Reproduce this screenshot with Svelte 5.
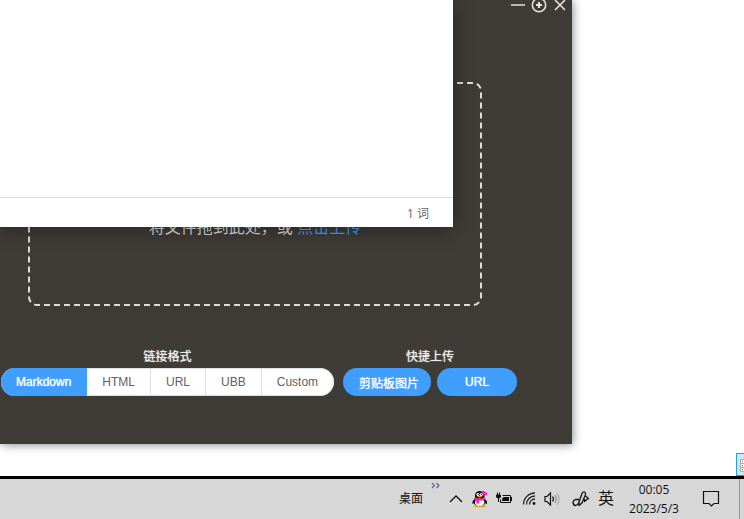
<script>
  const formats = ['Markdown', 'HTML', 'URL', 'UBB', 'Custom'];
  let selected = $state('Markdown');
</script>

<div class="desktop">
  <main class="workspace">
    <section class="uploader" aria-label="PicGo">
      <header class="titlebar">
        <button aria-label="Minimize">
          <svg width="16" height="16" viewBox="0 0 16 16"><path d="M1 8h14" stroke="#b9b7b4" stroke-width="2" /></svg>
        </button>
        <button aria-label="Mini window">
          <svg width="16" height="16" viewBox="0 0 16 16" fill="none" stroke="#e4e3e1">
            <circle cx="8" cy="8" r="6.7" stroke-width="1.6" />
            <path d="M8 5v6M5 8h6" stroke-width="2" />
          </svg>
        </button>
        <button aria-label="Close">
          <svg width="16" height="16" viewBox="0 0 16 16"><path d="M3 3l10 10M13 3L3 13" stroke="#e4e3e1" stroke-width="1.6" /></svg>
        </button>
      </header>

      <div class="dropzone">
        <svg class="frame" aria-hidden="true">
          <rect x="1" y="1" rx="8" />
        </svg>
        <p>将文件拖到此处，或 <a href="#upload">点击上传</a></p>
      </div>

      <div class="options">
        <div class="group">
          <span class="label" id="format">链接格式</span>
          <div class="segments" role="group" aria-labelledby="format">
            {#each formats as format}
              <button class:active={selected === format} aria-pressed={selected === format} onclick={() => (selected = format)}>{format}</button>
            {/each}
          </div>
        </div>
        <div class="group">
          <span class="label" id="quick">快捷上传</span>
          <div class="quick" role="group" aria-labelledby="quick">
            <button class="clipboard">剪贴板图片</button>
            <button class="url">URL</button>
          </div>
        </div>
      </div>
    </section>

    <section class="editor" aria-label="Editor">
      <div class="page"></div>
      <footer>1 词</footer>
    </section>

    <div class="langbar">
      <svg width="8" height="23" viewBox="0 0 8 23">
        <path d="M3.5 5.5H9v12H3.5zM4 9.5h4M4 13.5h4" fill="#fff" stroke="#aaa" />
        <path d="M5 7h1v1H5z" fill="#39a568" /><path d="M5 11h1v1H5z" fill="#3a7ee0" /><path d="M5 15h1v1H5z" fill="#d6273b" />
      </svg>
    </div>
  </main>

  <footer class="taskbar">
    <span class="toolbar">桌面</span>
    <button class="more" aria-label="More">
      <svg width="10" height="7" viewBox="0 0 10 7" fill="none" stroke="#5f60a8" stroke-width="1.2"><path d="M1 1l2.5 2.5L1 6M5.500 1L8 3.500 5.500 6" /></svg>
    </button>
    <div class="tray">
      <button aria-label="Show hidden icons">
        <svg width="16" height="18" viewBox="0 0 16 18" fill="none" stroke="#111" stroke-width="1.300"><path d="M2 12l6-6 6 6" /></svg>
      </button>
      <button aria-label="QQ">
        <svg width="16" height="18" viewBox="0 0 16 18">
          <path d="M3 8L.5 11.500v2.500l2-1zM12 8l3 3.500v2.500l-2-1z" fill="#080808" />
          <ellipse cx="7.700" cy="11.500" rx="6" ry="5.200" fill="#080808" />
          <ellipse cx="7.700" cy="12.500" rx="4.700" ry="3.900" fill="#fff" />
          <path d="M3 7.500Q2.500 1 7.500 1t5 6.500z" fill="#080808" />
          <ellipse cx="6" cy="4.500" rx="1.600" ry="1.600" fill="#fff" /><ellipse cx="9.400" cy="4.500" rx="1.600" ry="1.600" fill="#fff" />
          <path d="M6 4h1v1H6zM9 4h1v1H9z" fill="#080808" />
          <path d="M4.500 6.300q3.200-.8 6.500 0Q7.700 8.500 4.500 6.300z" fill="#ffad00" />
          <path d="M2.200 7.500q5.500 1.800 11 0v2q-3 1.400-6.200 1.300V13.500H4.300v-3l-2.100-.7z" fill="#f624b8" />
          <path d="M10 1.500l1.500-1L13 2l2 .5V5.500l-2-.5-1.500 0-1.200-1.200z" fill="#f624b8" />
          <ellipse cx="4.300" cy="16.300" rx="2.800" ry="1.100" fill="#ffad00" /><ellipse cx="11.200" cy="16.300" rx="2.800" ry="1.100" fill="#ffad00" />
        </svg>
      </button>
      <button aria-label="Battery">
        <svg width="16" height="18" viewBox="0 0 16 18" fill="none" stroke="#111">
          <path d="M1.500 2.500V5M3.500 2.500V5" /><path d="M.5 5h4v2L3.500 8h-2L.5 7z" fill="#111" /><path d="M2.500 8v4" />
          <path d="M6.500 5.500h8v7H4.500V9.500" /><path d="M6 8.500L7.500 7H13v4H6z" fill="#111" stroke="none" /><path d="M15.500 7v4" />
        </svg>
      </button>
      <button class="wifi" aria-label="Network">
        <svg width="16" height="18" viewBox="0 0 16 18" fill="none" stroke="#222" stroke-width="1.300">
          <path d="M1.500 14.500A11.500 11.500 0 0 1 13 3M4.500 14.500A8.500 8.500 0 0 1 13 6M7.500 14.500A5.500 5.500 0 0 1 13 9" />
          <circle cx="12" cy="13.500" r="1.400" fill="#111" stroke="none" />
        </svg>
      </button>
      <button aria-label="Volume">
        <svg width="16" height="18" viewBox="0 0 16 18" fill="none" stroke="#111" stroke-width="1.200">
          <path d="M1 6.500h2L6.500 3v12L3 11.500H1z" /><path d="M8.500 6.500q2 2.500 0 5" />
          <path d="M10.800 5q3 4 0 8" stroke="#888" /><path d="M13 3q4 6 0 12" stroke="#aaa" />
        </svg>
      </button>
      <button class="pen" aria-label="Windows Ink">
        <svg width="18" height="18" viewBox="0 0 18 18" fill="none" stroke="#111" stroke-width="1.300" stroke-linejoin="round">
          <path d="M7 15.500V12L10 3.500q1-2 2.500-1.500 1.500 1 1 2.500L10 13z" />
          <path d="M7 9.500H3.500Q1 10.500 1 13q.5 2.500 2.500 2.500 2 0 3.500-3M12.500 9v2.500L16 8.500M13.500 6l3 2.500-2 1" />
        </svg>
      </button>
      <button class="ime" aria-label="Input language">英</button>
      <time class="clock" datetime="2023-05-03T00:05">00:05<br />2023/5/3</time>
      <button aria-label="Notifications">
        <svg width="18" height="18" viewBox="0 0 18 18" fill="none" stroke="#111" stroke-width="1.200"><path d="M1.500 1.500h15v12h-4.500L9.500 16 7 13.500H1.500z" /></svg>
      </button>
    </div>
    <button class="show-desktop" aria-label="Show desktop"></button>
  </footer>
</div>

<style>
  :global(body) { margin: 0; background: #fff; }
  * { box-sizing: border-box; }
  button { border: 0; padding: 0; margin: 0; background: none; font: inherit; color: inherit; }
  svg { display: block; }

  .desktop {
    display: flex;
    flex-direction: column;
    height: 100vh;
    overflow: hidden;
    font-family: "Liberation Sans", "Noto Sans CJK SC", sans-serif;
    font-size: 12px;
  }
  .workspace { position: relative; flex: 1; min-height: 0; overflow: hidden; }

  .uploader {
    position: absolute;
    left: 0;
    top: 0;
    width: 572px;
    background: #3f3c37;
    color: #eee;
    padding-bottom: 48px;
    box-shadow: 1px 1px 9px rgba(0, 0, 0, 0.45);
  }
  .titlebar {
    display: flex;
    justify-content: flex-end;
    gap: 5px;
    height: 16px;
    margin-top: -3px;
    padding-right: 4px;
  }
  .dropzone {
    position: relative;
    height: 224px;
    margin: 69px 90px 0 28px;
    padding-top: 134px;
    text-align: center;
  }
  .frame { position: absolute; inset: 0; width: 100%; height: 100%; }
  .frame rect {
    width: calc(100% - 2px);
    height: calc(100% - 2px);
    fill: none;
    stroke: #ddd;
    stroke-width: 2;
    stroke-dasharray: 6 4;
  }
  .dropzone p { margin: 0; font-size: 16px; line-height: 24px; color: #ddd; }
  .dropzone a { color: #409eff; text-decoration: none; }

  .options { display: flex; gap: 9px; padding: 41px 0 0 1px; }
  .group { display: flex; flex-direction: column; align-items: center; }
  .label { line-height: 21px; text-shadow: 0 0 1px #eee; }
  .segments { display: flex; height: 28px; border-radius: 14px; overflow: hidden; background: #fff; }
  .segments button {
    padding: 0 15px;
    color: #606266;
    border: 1px solid #dcdfe6;
    border-left-width: 0;
  }
  .segments button:last-child { border-radius: 0 14px 14px 0; }
  .segments .active { background: #409eff; border-color: #409eff; color: #fff; text-shadow: 0 0 1px #fff; }
  .quick { display: flex; gap: 6px; }
  .quick button { height: 28px; border-radius: 14px; background: #409eff; color: #fff; text-shadow: 0 0 1px #fff; }
  .quick .clipboard { width: 88px; padding-left: 4px; }
  .quick .url { width: 80px; }

  .editor {
    position: absolute;
    left: 0;
    top: 0;
    width: 453px;
    background: #fff;
    box-shadow: 0 2px 20px rgba(0, 0, 0, 0.4);
  }
  .page { height: 197px; }
  .editor footer {
    height: 30px;
    padding-right: 24px;
    border-top: 1px solid #ddd;
    text-align: right;
    line-height: 32px;
    color: #666;
    font-family: "Open Sans", "Noto Sans CJK SC", sans-serif;
  }
  .langbar {
    position: absolute;
    right: 0;
    bottom: 0;
    border: 1px solid #2a9fd8;
    border-right: 0;
    background: #c9e8f8;
    height: 23px;
    width: 8px;
    overflow: hidden;
  }

  .taskbar {
    display: flex;
    justify-content: flex-end;
    height: 43px;
    border-top: 3px solid #000;
    background: #d7d7d7;
    color: #111;
  }
  .toolbar { line-height: 41px; }
  .more { align-self: flex-start; margin: 3px 7px 0 8px; }
  .tray { display: flex; align-items: center; gap: 8px; padding-right: 19px; }
  .wifi { margin: 0 -2px 0 2px; }
  .pen { margin-left: 4px; }
  .ime { font-size: 16px; line-height: 24px; }
  .clock {
    width: 64px;
    margin-right: 8px;
    text-align: center;
    font-family: "Open Sans", "Noto Sans", sans-serif;
    line-height: 19px;
  }
  .show-desktop { width: 5px; border-left: 1px solid #999; }
</style>
